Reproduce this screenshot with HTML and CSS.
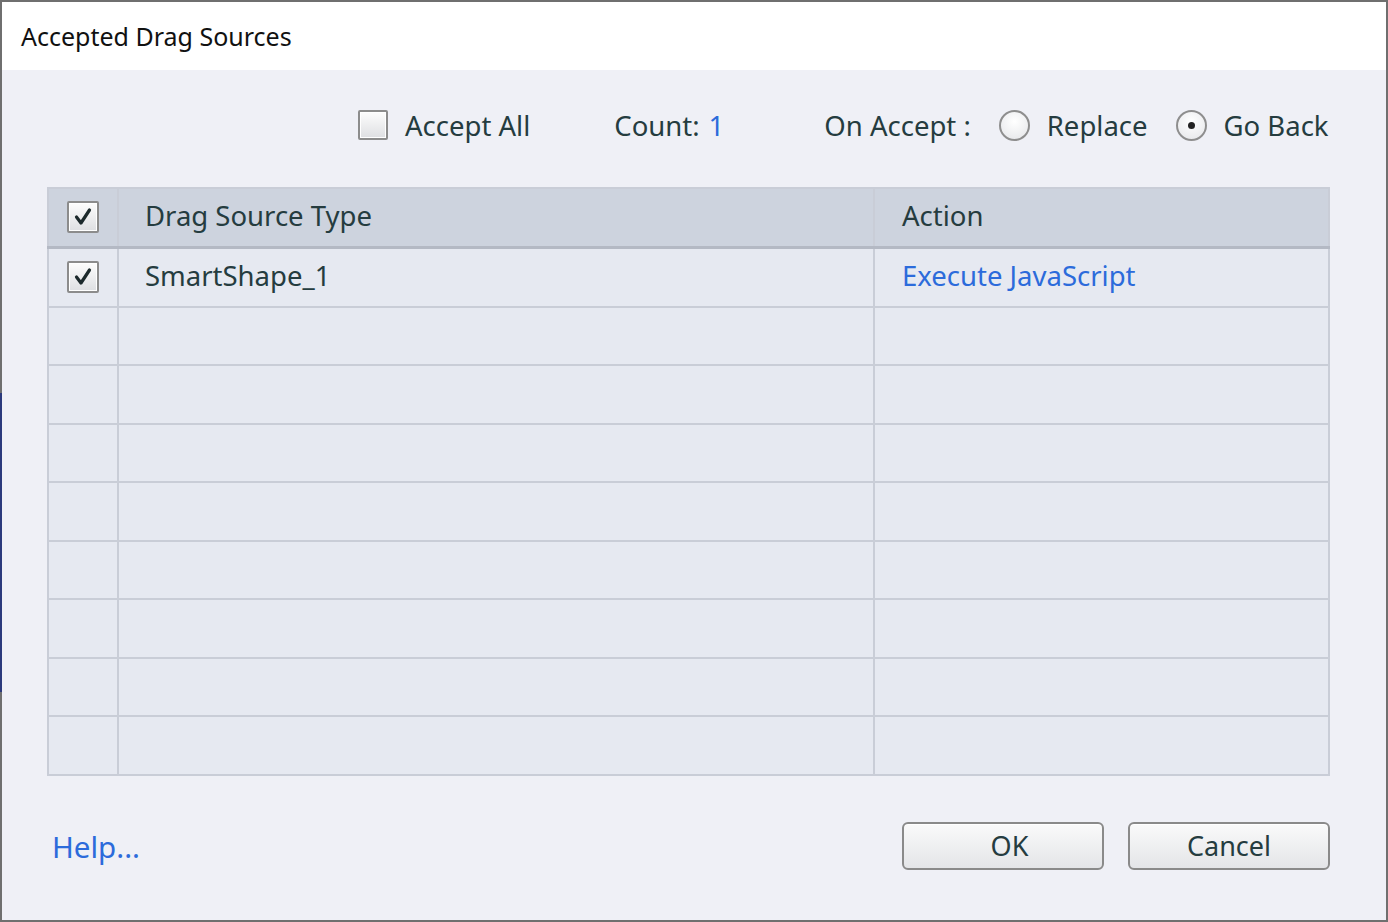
FILE: index.html
```html
<!DOCTYPE html>
<html>
<head>
    <title>Accepted Drag Sources</title>
    <meta http-equiv="Content-Type" content="text/html; charset=utf-8">
    <link rel="stylesheet" href="styles.css">
</head>
<body>
    <div class="dialog">
        <div class="title-bar">Accepted Drag Sources</div>

        <div class="content">
            <div class="options">
                <div class="option">
                    <span class="checkbox"></span>
                    <span class="label">Accept All</span>
                </div>
                <div class="option count">
                    <span class="label">Count:</span>
                    <span class="link">1</span>
                </div>
                <div class="option on-accept">
                    <span class="label">On Accept :</span>
                </div>
                <div class="option radio-group">
                    <span class="radio"></span>
                    <span class="label">Replace</span>
                </div>
                <div class="option radio-group">
                    <span class="radio checked"></span>
                    <span class="label">Go Back</span>
                </div>
            </div>

            <table class="sources">
                <tr class="head">
                    <td class="col-check">
                        <span class="checkbox checked">
                            <svg viewBox="0 0 20 20" width="20" height="20"><path d="M3.5 10 L8 16 L16.5 3" fill="none" stroke="#1d2a2c" stroke-width="3.2" stroke-linecap="round" stroke-linejoin="round"/></svg>
                        </span>
                    </td>
                    <td class="col-type">Drag Source Type</td>
                    <td class="col-action">Action</td>
                </tr>
                <tr>
                    <td class="col-check">
                        <span class="checkbox checked">
                            <svg viewBox="0 0 20 20" width="20" height="20"><path d="M3.5 10 L8 16 L16.5 3" fill="none" stroke="#1d2a2c" stroke-width="3.2" stroke-linecap="round" stroke-linejoin="round"/></svg>
                        </span>
                    </td>
                    <td class="col-type">SmartShape_1</td>
                    <td class="col-action"><span class="link">Execute JavaScript</span></td>
                </tr>
                <tr><td></td><td></td><td></td></tr>
                <tr><td></td><td></td><td></td></tr>
                <tr><td></td><td></td><td></td></tr>
                <tr><td></td><td></td><td></td></tr>
                <tr><td></td><td></td><td></td></tr>
                <tr><td></td><td></td><td></td></tr>
                <tr><td></td><td></td><td></td></tr>
                <tr><td></td><td></td><td></td></tr>
            </table>

            <div class="footer">
                <span class="link help">Help...</span>
                <div class="buttons">
                    <button class="btn btn-ok">OK</button>
                    <button class="btn">Cancel</button>
                </div>
            </div>
        </div>
    </div>
</body>
</html>
```

FILE: styles.css
```css
body, html {
    height: 100%;
    margin: 0;
}

body {
    box-sizing: border-box;
    padding: 2px;
    background: linear-gradient(#6f6f6f 393px, #2b3a7c 393px, #2b3a7c 692px, #6f6f6f 692px) 0 0 / 2px 100% no-repeat, #6f6f6f;
    font-family: "Noto Sans", "Open Sans", sans-serif;
    color: #253c3f;
    overflow: hidden;
}

.dialog {
    height: 100%;
    display: flex;
    flex-direction: column;
}

.title-bar {
    height: 68px;
    flex-shrink: 0;
    display: flex;
    align-items: center;
    padding-left: 19px;
    box-sizing: border-box;
    background: #fff;
    color: #111;
    font-size: 25px;
}

.content {
    flex: 1;
    background: #eff0f6;
    padding: 0 56px 0 45px;
}

.link {
    color: #2c6bdb;
}

/* top options row */
.options {
    display: flex;
    align-items: center;
    height: 34px;
    margin-top: 38px;
    padding-left: 311px;
    font-size: 27.5px;
    white-space: nowrap;
}

.option {
    display: flex;
    align-items: center;
    flex-shrink: 0;
    gap: 17px;
}

.count {
    margin-left: 84px;
    gap: 9px;
}

.on-accept {
    margin-left: 100px;
}

.radio-group {
    margin-left: 28px;
}

.checkbox {
    width: 30px;
    height: 30px;
    flex-shrink: 0;
    box-sizing: border-box;
    border: 2px solid #8c8c8c;
    border-radius: 2px;
    background: linear-gradient(#fdfdfd, #dedfe2);
    box-shadow: inset 0 0 0 1px #fff;
    display: inline-flex;
    align-items: center;
    justify-content: center;
}

.radio {
    width: 31px;
    height: 31px;
    flex-shrink: 0;
    box-sizing: border-box;
    border: 2px solid #8e8e8e;
    border-radius: 50%;
    background: radial-gradient(circle at 50% 35%, #ffffff, #e4e5e8);
    display: inline-flex;
    align-items: center;
    justify-content: center;
}

.radio.checked::after {
    content: "";
    width: 7px;
    height: 7px;
    border-radius: 50%;
    background: #222;
}

/* table */
.sources {
    width: 1283px;
    margin-top: 45px;
    border-collapse: collapse;
    border: 2px solid #babfcb;
    background: #e6e9f1;
    font-size: 27.5px;
}

.sources td {
    height: 53.5px;
    padding: 0 0 3px 0;
    border: 2px solid #c9cdd7;
}

.sources .head td {
    height: 52px;
    padding-bottom: 5px;
    background: #cdd3de;
    border-bottom: 3px solid #b4b9c4;
}

.col-check {
    width: 68px;
    text-align: center;
}

.col-check .checkbox {
    width: 32px;
    height: 32px;
    margin-top: 5px;
}

.col-type {
    width: 728px;
    padding-left: 26px !important;
}

.col-action {
    padding-left: 27px !important;
}

/* footer */
.footer {
    display: flex;
    align-items: center;
    justify-content: space-between;
    margin-top: 46px;
    padding-left: 5px;
}

.help {
    font-size: 29.5px;
    margin-top: 2px;
}

.buttons {
    display: flex;
    gap: 24px;
}

.btn {
    width: 202px;
    height: 48px;
    border: 2px solid #8a8a8a;
    border-radius: 6px;
    background: linear-gradient(#fafafa, #e4e5e8);
    box-shadow: inset 0 1px 0 #fff;
    font-family: "Noto Sans", "Open Sans", sans-serif;
    font-size: 27px;
    color: #253c3f;
    padding: 0;
}

.btn-ok {
    padding-left: 13px;
}
```
